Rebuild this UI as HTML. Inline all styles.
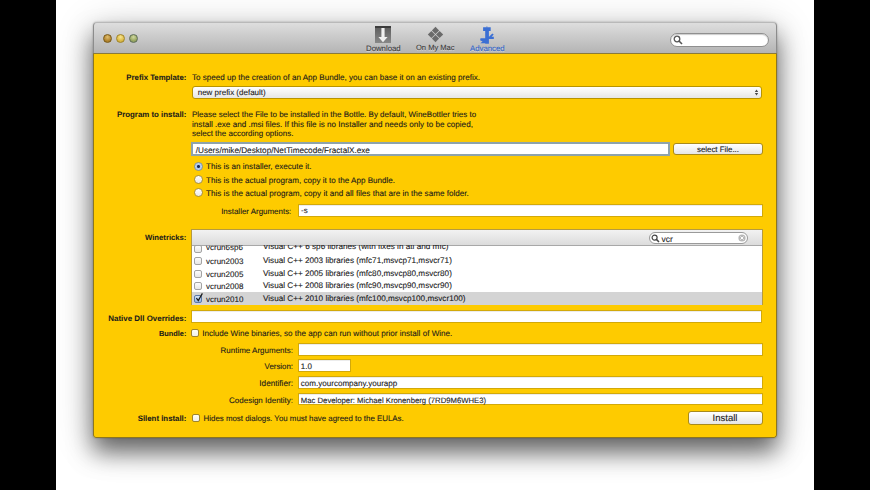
<!DOCTYPE html>
<html><head><meta charset="utf-8">
<style>
*{margin:0;padding:0;box-sizing:border-box}
html,body{width:870px;height:490px;overflow:hidden;background:#fff;font-family:"Liberation Sans",sans-serif;color:#1a1a1a;text-rendering:geometricPrecision}
.abs{position:absolute}
#bl{left:0;top:0;width:56px;height:490px;background:#000}
#br{left:814px;top:0;width:56px;height:490px;background:#000}
#win{left:93px;top:22px;width:684px;height:416px;border-radius:4px 4px 3px 3px;box-shadow:0 14px 23px rgba(0,0,0,0.55),0 6px 40px rgba(0,0,0,0.2),0 0 2px rgba(0,0,0,0.3);overflow:hidden;background:#c8c8c8}
#tb{left:0;top:0;width:684px;height:31px;background:linear-gradient(#dedede,#cdcdcd 40%,#b4b4b4);border-top:1px solid #b9b9b9;border-left:1px solid #8c8c8c;border-right:1px solid #8c8c8c;border-radius:4px 4px 0 0}
#tbline{left:0;top:31px;width:684px;height:1px;background:#8a7a3a}
#content{left:0;top:32px;width:684px;height:384px;background:#fecb00;border:1px solid #8c7620;border-top:none;border-radius:0 0 3px 3px}
.t{position:absolute;white-space:nowrap;font-size:8px;line-height:8px;margin-top:0.45px;-webkit-text-stroke:0.1px #1a1a1a}
.t.b{-webkit-text-stroke:0.05px #1a1a1a}
.b{font-weight:bold;font-size:7.8px;line-height:8px}
.r{text-align:right}
.fld{position:absolute;background:#fff;border:1px solid #d2a90a;box-shadow:inset 0 1px 0 #ececec}
.btn{position:absolute;border:1px solid #a88a1c;border-radius:3px;background:linear-gradient(#fff,#f3f3f3 50%,#e6e6e6);}
.tl{position:absolute;width:9px;height:9px;border-radius:50%}
.cb{position:absolute;width:8px;height:7.7px;border:1px solid #a3a3a3;border-radius:2px;background:linear-gradient(#fcfcfc,#e6e6e6)}
.rad{position:absolute;width:9px;height:9px;border:1px solid #a89040;border-radius:50%;background:linear-gradient(#fff,#e9e9e9)}
.lbl{position:absolute;font-size:7.8px;line-height:8px;color:#383838;white-space:nowrap;text-shadow:0 1px 0 rgba(255,255,255,0.45);-webkit-text-stroke:0.1px currentColor}
</style></head><body>
<div id="bl" class="abs"></div>
<div id="br" class="abs"></div>
<div id="win" class="abs">
  <div id="tb" class="abs"></div>
  <div id="tbline" class="abs"></div>
  <div id="content" class="abs"></div>
</div>

<!-- traffic lights -->
<div class="tl" style="left:103px;top:34px;border:1px solid #7a5a18;background:radial-gradient(circle at 50% 30%,#e0bf70,#b48630 60%,#96701e)"></div>
<div class="tl" style="left:116px;top:34px;border:1px solid #a08428;background:radial-gradient(circle at 50% 30%,#f8e590,#dcbb48 60%,#c4a238)"></div>
<div class="tl" style="left:129px;top:34px;border:1px solid #5e6e58;background:radial-gradient(circle at 50% 30%,#d0d8a0,#9aa862 60%,#829060)"></div>

<!-- toolbar icons -->
<div class="abs" style="left:375px;top:26.2px;width:15.8px;height:16.4px;background:linear-gradient(#3c3c3c 0,#3c3c3c 1.5px,#5e5e5e 1.5px,#888)"></div>
<svg class="abs" style="left:375px;top:26px" width="16" height="17" viewBox="0 0 16 17"><path d="M6.4 1.9 H9.6 V11 H12.6 L8 16.2 L3.4 11 H6.4 Z" fill="#f0f0f0"/></svg>
<div class="lbl" style="left:366px;top:44.5px">Download</div>

<svg class="abs" style="left:426.5px;top:26px" width="17" height="17" viewBox="0 0 17 17">
<g fill="#6a6a6a"><path d="M8.5 0.8 L12.1 4.4 L8.5 8 L4.9 4.4Z"/><path d="M4.4 4.9 L8 8.5 L4.4 12.1 L0.8 8.5Z"/><path d="M12.6 4.9 L16.2 8.5 L12.6 12.1 L9 8.5Z"/><path d="M8.5 9 L12.1 12.6 L8.5 16.2 L4.9 12.6Z"/></g></svg>
<div class="lbl" style="left:416px;top:44.2px;font-size:7.55px">On My Mac</div>

<svg class="abs" style="left:478px;top:25.5px" width="18" height="19" viewBox="0 0 18 19"><path fill="#3b6fd4" d="M5.1 1.3 H12.7 V5 H10.9 V10.6 H11.3 L14.3 7.6 L15.7 8.5 L13.6 10.8 H15.8 V13 H10.9 V17.8 H7.2 V17.2 H2.3 L4.6 15.4 L2.1 14.2 L2.5 12.3 H7.2 V5 H5.1 Z"/><path fill="#3b6fd4" d="M8.4 0.5 h1 v1 h-1z"/></svg>
<div class="lbl" style="left:470px;top:44.5px;color:#2f64c8">Advanced</div>

<!-- toolbar search -->
<div class="abs" style="left:670px;top:32.6px;width:99px;height:14px;border-radius:7px;background:#fff;border:1px solid #8f8f8f;box-shadow:inset 0 1px 1px rgba(0,0,0,0.2)"></div>
<svg class="abs" style="left:673px;top:35px" width="10" height="10" viewBox="0 0 10 10"><circle cx="4" cy="4" r="2.8" fill="none" stroke="#555" stroke-width="1.3"/><path d="M6 6 L9 9" stroke="#555" stroke-width="1.6"/></svg>

<!-- Prefix template -->
<div class="t b r" style="right:683.6px;top:73.1px;font-size:7.81px">Prefix Template:</div>
<div class="t" style="left:192px;top:73.1px;font-size:8.11px">To speed up the creation of an App Bundle, you can base it on an existing prefix.</div>
<div class="btn" style="left:191.8px;top:86px;width:570.7px;height:12.6px;border-color:#b89400"></div>
<svg class="abs" style="left:753px;top:88px" width="7" height="9" viewBox="0 0 7 9"><path d="M3.5 1.6 L5.2 3.9 H1.8Z M3.5 7.4 L5.2 5.1 H1.8Z" fill="#4a4a4a"/></svg>
<div class="t" style="left:197.7px;top:88.9px">new prefix (default)</div>

<!-- Program to install -->
<div class="t b r" style="right:683.6px;top:110.6px;font-size:7.87px">Program to install:</div>
<div class="t" style="left:192px;top:110.6px;font-size:8.0px">Please select the File to be installed in the Bottle. By default, WineBottler tries to</div>
<div class="t" style="left:192px;top:120.4px;font-size:8.15px">install .exe and .msi files. If this file is no Installer and needs only to be copied,</div>
<div class="t" style="left:192px;top:129.6px;font-size:8px">select the according options.</div>

<div class="fld" style="left:191.3px;top:142px;width:479px;height:14px;border:2px solid #8ea3ab;box-shadow:0 0 0.5px #8ea3ab"></div>
<div class="t" style="left:195.8px;top:146.5px;font-size:8.18px">/Users/mike/Desktop/NetTimecode/FractalX.exe</div>
<div class="btn" style="left:673.3px;top:143.2px;width:89.3px;height:11.9px"></div>
<div class="t" style="left:697px;top:145.3px;font-size:7.87px">select File...</div>

<div class="rad" style="left:194px;top:162.4px;background:radial-gradient(circle,#1a2a55 0,#1a2a55 1.3px,#a8c4ea 1.6px,#d8e6f6);border-color:#8090a0"></div>
<div class="t" style="left:206px;top:162.9px;font-size:8.08px">This is an installer, execute it.</div>
<div class="rad" style="left:194px;top:174.9px"></div>
<div class="t" style="left:206px;top:176.3px;font-size:8.08px">This is the actual program, copy it to the App Bundle.</div>
<div class="rad" style="left:194px;top:187.9px"></div>
<div class="t" style="left:206px;top:189.6px;font-size:8.15px">This is the actual program, copy it and all files that are in the same folder.</div>

<div class="t r" style="right:578.7px;top:208px;font-size:7.95px">Installer Arguments:</div>
<div class="fld" style="left:297.5px;top:204.2px;width:465px;height:12.9px"></div>
<div class="t" style="left:301px;top:207px">-s</div>

<!-- Winetricks -->
<div class="t b r" style="right:683.6px;top:233.5px;font-size:7.7px">Winetricks:</div>
<div class="abs" style="left:191px;top:229.3px;width:571.5px;height:76px;border:1px solid #b59a40;background:#fff;overflow:hidden">
  <div class="abs" style="left:0;top:0;width:570px;height:15.5px;background:linear-gradient(#f2f2f2,#dcdcdc);border-bottom:1px solid #a8a8a8"></div>
</div>
<div class="abs" style="left:648.5px;top:232px;width:99px;height:11.6px;border-radius:6px;background:#fff;border:1px solid #9a9a9a"></div>
<svg class="abs" style="left:651px;top:233.5px" width="9" height="9" viewBox="0 0 9 9"><circle cx="3.6" cy="3.6" r="2.5" fill="none" stroke="#444" stroke-width="1.2"/><path d="M5.4 5.4 L8 8" stroke="#444" stroke-width="1.5"/></svg>
<div class="t" style="left:661.5px;top:234.3px;font-size:8.5px">vcr</div>
<svg class="abs" style="left:738px;top:234px" width="8" height="8" viewBox="0 0 8 8"><circle cx="4" cy="4" r="3.6" fill="#b8b8b8"/><path d="M2.5 2.5 L5.5 5.5 M5.5 2.5 L2.5 5.5" stroke="#fff" stroke-width="1"/></svg>

<!-- table rows -->
<div class="abs" style="left:192px;top:245.3px;width:570px;height:59.5px;overflow:hidden">
  <div class="abs" style="left:0;top:46.4px;width:570px;height:13.1px;background:#d4d4d4"></div>
  <div class="cb" style="left:2.3px;top:-0.3px"></div>
  <div class="t" style="left:14px;top:-1.7px">vcrun6sp6</div>
  <div class="t" style="left:71px;top:-2.3px;font-size:8.2px">Visual C++ 6 sp6 libraries (with fixes in atl and mfc)</div>
  <div class="cb" style="left:2.3px;top:12.2px"></div>
  <div class="t" style="left:14px;top:12.3px">vcrun2003</div>
  <div class="t" style="left:71px;top:11.3px;font-size:8.16px">Visual C++ 2003 libraries (mfc71,msvcp71,msvcr71)</div>
  <div class="cb" style="left:2.3px;top:24.7px"></div>
  <div class="t" style="left:14px;top:24.8px">vcrun2005</div>
  <div class="t" style="left:71px;top:23.8px;font-size:8.16px">Visual C++ 2005 libraries (mfc80,msvcp80,msvcr80)</div>
  <div class="cb" style="left:2.3px;top:37.2px"></div>
  <div class="t" style="left:14px;top:37.3px">vcrun2008</div>
  <div class="t" style="left:71px;top:36.3px;font-size:8.16px">Visual C++ 2008 libraries (mfc90,msvcp90,msvcr90)</div>
  <div class="cb" style="left:2.3px;top:49.7px;background:linear-gradient(#d5e4f7,#93b4e2);border-color:#5a78a8"></div>
  <svg class="abs" style="left:2px;top:46px" width="10" height="12" viewBox="0 0 10 12"><path d="M2.4 7.2 L4.3 9.6 L8.4 2.4" fill="none" stroke="#1a1a1a" stroke-width="1.2"/></svg>
  <div class="t" style="left:14px;top:50.4px">vcrun2010</div>
  <div class="t" style="left:71px;top:49.4px;font-size:8.17px">Visual C++ 2010 libraries (mfc100,msvcp100,msvcr100)</div>
</div>

<!-- Native Dll overrides -->
<div class="t b r" style="right:683.6px;top:314.3px;font-size:7.94px">Native Dll Overrides:</div>
<div class="fld" style="left:191.2px;top:310.3px;width:571.2px;height:13.1px"></div>

<div class="t b r" style="right:683.6px;top:329.5px;font-size:7.4px">Bundle:</div>
<div class="cb" style="left:191px;top:329.3px;width:8px;height:8.2px;border-color:#9c8430;background:linear-gradient(#fffef0,#f0f0ea)"></div>
<div class="t" style="left:202.2px;top:329.5px;font-size:8.1px">Include Wine binaries, so the app can run without prior install of Wine.</div>

<div class="t r" style="right:577px;top:346.1px;font-size:8.0px">Runtime Arguments:</div>
<div class="fld" style="left:298px;top:343px;width:464.5px;height:12.6px"></div>

<div class="t r" style="right:577px;top:362.6px;font-size:7.86px">Version:</div>
<div class="fld" style="left:298px;top:359.4px;width:52.6px;height:12.8px"></div>
<div class="t" style="left:300.8px;top:362.6px">1.0</div>

<div class="t r" style="right:577px;top:379.1px;font-size:8.2px">Identifier:</div>
<div class="fld" style="left:298px;top:376.1px;width:464.5px;height:12.8px"></div>
<div class="t" style="left:300.8px;top:379.1px;font-size:8.05px">com.yourcompany.yourapp</div>

<div class="t r" style="right:577px;top:396.1px;font-size:7.99px">Codesign Identity:</div>
<div class="fld" style="left:298px;top:392.5px;width:464.5px;height:12.7px"></div>
<div class="t" style="left:300.8px;top:396.1px;font-size:7.72px">Mac Developer: Michael Kronenberg (7RD9M6WHE3)</div>

<div class="t b r" style="right:683.6px;top:414.5px;font-size:7.84px">Silent install:</div>
<div class="cb" style="left:191.8px;top:414.1px;width:8px;height:8px;border-color:#9c8430;background:linear-gradient(#fffef0,#f0f0ea)"></div>
<div class="t" style="left:203.6px;top:414.5px;font-size:7.89px">Hides most dialogs. You must have agreed to the EULAs.</div>

<div class="btn" style="left:688.2px;top:411px;width:74.8px;height:13.6px"></div>
<div class="t" style="left:712.6px;top:413.8px;font-size:9.5px;line-height:9px">Install</div>

</body></html>
